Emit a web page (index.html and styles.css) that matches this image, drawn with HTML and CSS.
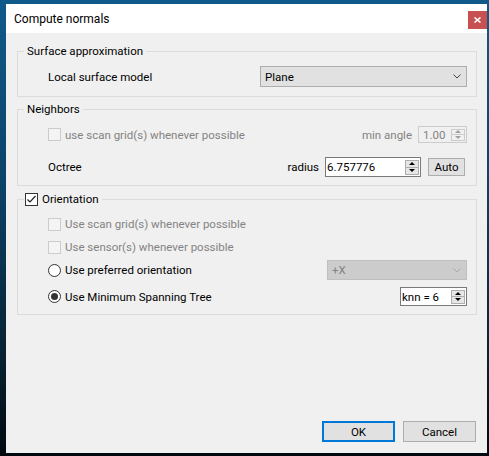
FILE: index.html
```html
<!DOCTYPE html>
<html lang="en">
<head>
    <meta charset="UTF-8">
    <title>Compute normals</title>
    <link rel="stylesheet" href="styles.css">
</head>
<body>
    <div class="dialog">
        <div class="titlebar">
            <span class="title">Compute normals</span>
            <div class="close-btn">
                <svg width="7" height="6" viewBox="0 0 7 6"><path d="M0.5 0.5 L6.5 5.5 M6.5 0.5 L0.5 5.5" stroke="#fff" stroke-width="1.6"/></svg>
            </div>
        </div>

        <div class="dialog-body">
            <fieldset class="group group-surface">
                <legend>Surface approximation</legend>
                <div class="row row-model">
                    <span>Local surface model</span>
                    <div class="combo combo-model">
                        <span>Plane</span>
                        <svg class="chevron" width="8" height="5" viewBox="0 0 8 5"><path d="M0.5 0.5 L4 4 L7.5 0.5" fill="none" stroke="#444" stroke-width="1"/></svg>
                    </div>
                </div>
            </fieldset>

            <fieldset class="group group-neighbors">
                <legend>Neighbors</legend>
                <div class="row row-grid">
                    <span class="checkbox disabled"></span>
                    <span class="option-text disabled-text">use scan grid(s) whenever possible</span>
                    <span class="disabled-text angle-label">min angle</span>
                    <div class="spin spin-angle disabled">
                        <span>1.00</span>
                        <span class="spin-arrows"><span class="arrow up"></span><span class="arrow down"></span></span>
                    </div>
                </div>
                <div class="row row-octree">
                    <span>Octree</span>
                    <span class="radius-label">radius</span>
                    <div class="spin spin-radius">
                        <span>6.757776</span>
                        <span class="spin-arrows"><span class="arrow up"></span><span class="arrow down"></span></span>
                    </div>
                    <div class="btn btn-auto">Auto</div>
                </div>
            </fieldset>

            <fieldset class="group group-orientation">
                <legend class="check-legend">
                    <span class="checkbox checked">
                        <svg width="11" height="11" viewBox="0 0 11 11"><path d="M1.5 5.5 L4 8 L9.5 2" fill="none" stroke="#222" stroke-width="1.2"/></svg>
                    </span>
                    <span>Orientation</span>
                </legend>
                <div class="row row-opt">
                    <span class="checkbox disabled"></span>
                    <span class="option-text disabled-text">Use scan grid(s) whenever possible</span>
                </div>
                <div class="row row-opt">
                    <span class="checkbox disabled"></span>
                    <span class="option-text disabled-text">Use sensor(s) whenever possible</span>
                </div>
                <div class="row row-opt">
                    <span class="radio"></span>
                    <span class="option-text">Use preferred orientation</span>
                    <div class="combo combo-axis disabled">
                        <span>+X</span>
                        <svg class="chevron" width="8" height="5" viewBox="0 0 8 5"><path d="M0.5 0.5 L4 4 L7.5 0.5" fill="none" stroke="#a8a8a8" stroke-width="1"/></svg>
                    </div>
                </div>
                <div class="row row-mst">
                    <span class="radio selected"><span class="radio-dot"></span></span>
                    <span class="option-text">Use Minimum Spanning Tree</span>
                    <div class="spin spin-knn">
                        <span>knn = 6</span>
                        <span class="spin-arrows"><span class="arrow up"></span><span class="arrow down"></span></span>
                    </div>
                </div>
            </fieldset>

            <div class="buttons">
                <div class="btn btn-default">OK</div>
                <div class="btn">Cancel</div>
            </div>
        </div>
    </div>
</body>
</html>
```

FILE: styles.css
```css
* {
    margin: 0;
    padding: 0;
    box-sizing: border-box;
}

body {
    width: 489px;
    height: 456px;
    overflow: hidden;
    background: linear-gradient(to bottom, #0f5a8a 0%, #0c4268 40%, #06202f 80%, #02090e 100%);
    font-family: Roboto, "Noto Sans CJK JP", sans-serif;
    font-size: 11.5px;
    color: #000;
}

.dialog {
    width: 481px;
    height: 449px;
    margin: 4px 0 0 6px;
    background: #f0f0f0;
    display: flex;
    flex-direction: column;
}

/* Title bar */
.titlebar {
    height: 29px;
    background: #ffffff;
    display: flex;
    align-items: flex-start;
}

.title {
    margin: 7px 0 0 8px;
    font-size: 12px;
    line-height: 16px;
    color: #000;
}

.close-btn {
    margin: 7px 0 0 auto;
    width: 19px;
    height: 18px;
    background: #c75050;
    display: flex;
    align-items: center;
    justify-content: center;
}

.dialog-body {
    flex: 1;
    display: flex;
    flex-direction: column;
    padding: 0 10px 11px 11px;
}

/* Group boxes */
.group {
    border: 1px solid #dcdcdc;
    padding: 0 9px 0 30px;
    min-width: 0;
}

.group legend {
    margin-left: -24px;
    padding: 0 3px;
    height: 14px;
    line-height: 14px;
}

.group-surface {
    margin-top: 11px;
    padding-top: 8px;
    padding-bottom: 9px;
}

.group-neighbors {
    margin-top: 5px;
    padding-top: 10px;
    padding-bottom: 8px;
}

.group-orientation {
    margin-top: 6px;
    padding-top: 8px;
    padding-bottom: 8px;
}

.group .check-legend {
    display: flex;
    align-items: center;
    gap: 4px;
    padding-left: 1px;
}

.row {
    display: flex;
    align-items: center;
}

.row-model {
    height: 21px;
}

.row-grid {
    height: 17px;
}

.row-octree {
    height: 20px;
    margin-top: 14px;
}

.row-opt {
    height: 20px;
}

.row-opt + .row-opt {
    margin-top: 3px;
}

.row-mst {
    height: 19px;
    margin-top: 7px;
}

.option-text {
    margin-left: 4px;
}

.disabled-text {
    color: #838383;
}

/* Check boxes and radios */
.checkbox {
    width: 13px;
    height: 13px;
    border: 1px solid #333;
    background: #fff;
    display: flex;
    align-items: center;
    justify-content: center;
    flex-shrink: 0;
}

.checkbox.disabled {
    border-color: #cccccc;
    background: #f4f4f4;
}

.radio {
    width: 13px;
    height: 13px;
    border: 1px solid #333;
    border-radius: 50%;
    background: #fff;
    display: flex;
    align-items: center;
    justify-content: center;
    flex-shrink: 0;
}

.radio-dot {
    width: 7px;
    height: 7px;
    border-radius: 50%;
    background: #333;
}

/* Combo boxes */
.combo {
    display: flex;
    align-items: center;
    justify-content: space-between;
    margin-left: auto;
    padding: 0 5px 0 4px;
    background: #e1e1e1;
    border: 1px solid #adadad;
}

.combo-model {
    width: 207px;
    height: 21px;
}

.combo-axis {
    width: 140px;
    height: 20px;
    background: #cccccc;
    border-color: #bfbfbf;
    color: #838383;
}

/* Spin boxes */
.spin {
    display: flex;
    align-items: center;
    justify-content: space-between;
    background: #fff;
    border: 1px solid #7a7a7a;
    padding: 0 1px 0 1px;
}

.spin-angle {
    width: 49px;
    height: 17px;
    margin-left: 6px;
    padding-left: 4px;
    background: #f0f0f0;
    border-color: #cccccc;
    color: #838383;
}

.spin-radius {
    width: 96px;
    height: 20px;
    margin-left: 6px;
}

.spin-knn {
    width: 67px;
    height: 19px;
    margin-left: auto;
    padding-left: 1px;
}

.angle-label,
.radius-label {
    margin-left: auto;
}

.spin-arrows {
    width: 14px;
    height: calc(100% - 3px);
    border: 1px solid #adadad;
    background: #e6e6e6;
    display: flex;
    flex-direction: column;
}

.spin-arrows .arrow {
    flex: 1;
    display: flex;
    align-items: center;
    justify-content: center;
}

.spin-arrows .arrow.up {
    border-bottom: 1px solid #adadad;
}

.arrow.up::after {
    content: "";
    border-left: 3px solid transparent;
    border-right: 3px solid transparent;
    border-bottom: 3px solid #000;
}

.arrow.down::after {
    content: "";
    border-left: 3px solid transparent;
    border-right: 3px solid transparent;
    border-top: 3px solid #000;
}

.spin.disabled .spin-arrows {
    border-color: #cccccc;
    background: #f0f0f0;
}

.spin.disabled .arrow.up {
    border-bottom-color: #cccccc;
}

.spin.disabled .arrow.up::after {
    border-bottom-color: #a0a0a0;
}

.spin.disabled .arrow.down::after {
    border-top-color: #a0a0a0;
}

/* Push buttons */
.btn {
    width: 73px;
    height: 21px;
    background: #e1e1e1;
    border: 1px solid #adadad;
    display: flex;
    align-items: center;
    justify-content: center;
}

.btn-auto {
    width: 37px;
    height: 18px;
    margin: 0 2px 0 7px;
}

.btn-default {
    border: 2px solid #0078d7;
}

.buttons {
    margin-top: auto;
    margin-right: 1px;
    display: flex;
    justify-content: flex-end;
    gap: 8px;
}
```
